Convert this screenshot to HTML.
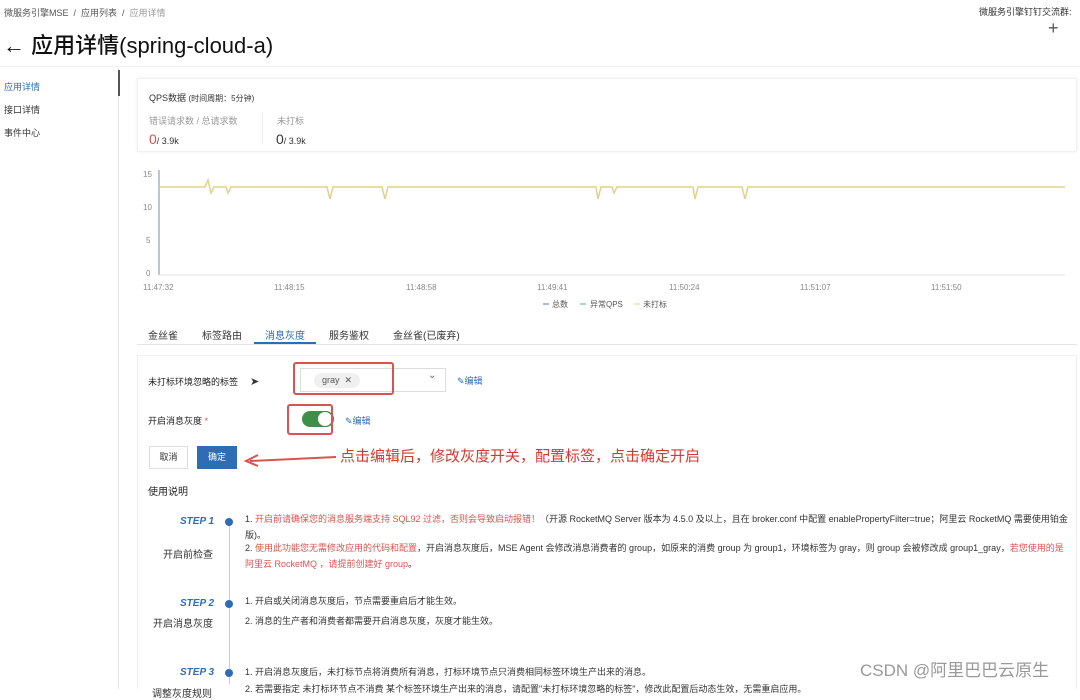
<!DOCTYPE html>
<html><head><meta charset="utf-8"><style>
*{margin:0;padding:0;box-sizing:border-box}
body{width:1080px;height:689px;overflow:hidden;background:#fff;font-family:"Liberation Sans","Noto Sans CJK SC",sans-serif;color:#333;position:relative}
.a{position:absolute;white-space:nowrap}
.s{font-size:9px}
.red{color:#d9534f}
.lk{color:#2e6db4;font-size:9px}
</style></head><body>
<div class="a s" style="left:4px;top:6px;color:#555">微服务引擎MSE &nbsp;/&nbsp; 应用列表 &nbsp;/&nbsp; <span style="color:#999">应用详情</span></div>
<div class="a s" style="left:979px;top:5px;color:#333">微服务引擎钉钉交流群:</div>
<div class="a" style="left:1048px;top:18px;font-size:18px;color:#555">+</div>
<div class="a" style="left:3px;top:28px;font-size:22px;color:#111;font-weight:500">← 应用详情(spring-cloud-a)</div>
<div class="a" style="left:0;top:66px;width:1080px;height:1px;background:#f0f0f0"></div>
<div class="a" style="left:118px;top:68px;width:1px;height:621px;background:#e5e5e5"></div>
<div class="a" style="left:118px;top:70px;width:2px;height:26px;background:#555"></div>
<div class="a s" style="left:4px;top:80px;color:#2e6db4">应用详情</div>
<div class="a s" style="left:4px;top:103px">接口详情</div>
<div class="a s" style="left:4px;top:126px">事件中心</div>

<div class="a" style="left:137px;top:78px;width:940px;height:74px;border:1px solid #f0f0f0;box-shadow:0 0 3px #eee"></div>
<div class="a s" style="left:149px;top:91px">QPS数据 <span style="font-size:8px">(时间周期：5分钟)</span></div>
<div class="a s" style="left:149px;top:114px;color:#999">错误请求数 / 总请求数</div>
<div class="a" style="left:149px;top:131px;font-size:14px"><span class="red">0</span><span style="font-size:9px">/ 3.9k</span></div>
<div class="a" style="left:262px;top:112px;width:1px;height:32px;background:#eee"></div>
<div class="a s" style="left:277px;top:114px;color:#999">未打标</div>
<div class="a" style="left:276px;top:131px;font-size:14px">0<span style="font-size:9px">/ 3.9k</span></div>

<svg class="a" style="left:0;top:0" width="1080" height="320">
<g font-size="8" fill="#888" font-family="Liberation Sans">
<text x="143" y="177">15</text><text x="143" y="210">10</text><text x="146" y="243">5</text><text x="146" y="276">0</text>
<text x="143" y="290">11:47:32</text><text x="274" y="290">11:48:15</text><text x="406" y="290">11:48:58</text><text x="537" y="290">11:49:41</text><text x="669" y="290">11:50:24</text><text x="800" y="290">11:51:07</text><text x="931" y="290">11:51:50</text>
<text x="552" y="307" fill="#555">总数</text><text x="590" y="307" fill="#555">异常QPS</text><text x="643" y="307" fill="#555">未打标</text>
</g>
<line x1="543" y1="304" x2="549" y2="304" stroke="#4b7fb5"/><line x1="580" y1="304" x2="586" y2="304" stroke="#6aa7a0"/><line x1="634" y1="304" x2="640" y2="304" stroke="#e3d08a"/>
<line x1="159" y1="170" x2="159" y2="275" stroke="#6a8faf"/>
<line x1="159" y1="275" x2="1065" y2="275" stroke="#e5e5e5"/>
<polyline fill="none" stroke="#e3d08a" stroke-width="1.5" points="159,187 205,187 208,180 211,193 214,187 226,187 228,193 231,187 327,187 330,199 333,187 382,187 385,199 388,187 596,187 598,199 601,187 612,187 614,193 617,187 693,187 695,199 698,187 742,187 745,199 748,187 1065,187"/>
</svg>

<div class="a" style="left:137px;top:344px;width:940px;height:1px;background:#e5e5e5"></div>
<div class="a" style="left:148px;top:327px;font-size:10px">金丝雀</div>
<div class="a" style="left:202px;top:327px;font-size:10px">标签路由</div>
<div class="a" style="left:265px;top:327px;font-size:10px;color:#2e6db4">消息灰度</div>
<div class="a" style="left:254px;top:342px;width:62px;height:2px;background:#2e6db4"></div>
<div class="a" style="left:329px;top:327px;font-size:10px">服务鉴权</div>
<div class="a" style="left:393px;top:327px;font-size:10px">金丝雀(已废弃)</div>
<div class="a" style="left:137px;top:355px;width:940px;height:334px;border:1px solid #f0f0f0;border-bottom:none"></div>

<div class="a s" style="left:148px;top:375px;color:#222">未打标环境忽略的标签</div>
<div class="a" style="left:250px;top:375px;font-size:11px">➤</div>
<div class="a" style="left:300px;top:368px;width:146px;height:24px;border:1px solid #ddd"></div>
<div class="a s" style="left:314px;top:373px;background:#f0f0f0;border-radius:8px;padding:2px 8px;color:#555">gray &nbsp;✕</div>
<div class="a" style="left:428px;top:370px;font-size:10px;color:#666">⌄</div>
<div class="a" style="left:293px;top:362px;width:101px;height:33px;border:2px solid #d9534f;border-radius:3px"></div>
<div class="a lk" style="left:457px;top:374px">✎编辑</div>

<div class="a s" style="left:148px;top:414px;color:#222">开启消息灰度 <span class="red">*</span></div>
<div class="a" style="left:302px;top:411px;width:32px;height:16px;border-radius:8px;background:#3f8f4a"></div>
<div class="a" style="left:318px;top:412px;width:14px;height:14px;border-radius:7px;background:#fff"></div>
<div class="a" style="left:287px;top:404px;width:46px;height:31px;border:2px solid #d9534f;border-radius:3px"></div>
<div class="a lk" style="left:345px;top:414px">✎编辑</div>

<div class="a s" style="left:149px;top:446px;width:39px;height:23px;border:1px solid #ddd;text-align:center;line-height:21px">取消</div>
<div class="a s" style="left:197px;top:446px;width:40px;height:23px;background:#2e6db4;color:#fff;text-align:center;line-height:23px">确定</div>
<svg class="a" style="left:240px;top:448px" width="100" height="20"><line x1="96" y1="9" x2="10" y2="13" stroke="#d9534f" stroke-width="2"/><path d="M18 7 L6 13 L18 18" fill="none" stroke="#d9534f" stroke-width="2"/></svg>
<div class="a" style="left:340px;top:445px;font-size:15px;color:#d03b2f;background:#fff">点击编辑后，修改灰度开关，配置标签，点击确定开启</div>

<div class="a" style="left:148px;top:483px;font-size:10px;color:#222">使用说明</div>
<div class="a" style="left:229px;top:524px;width:1px;height:160px;background:#ccc"></div>
<div class="a" style="left:180px;top:516px;font-size:10px;font-weight:bold;font-style:italic;color:#2e6db4">STEP 1</div>
<div class="a" style="left:225px;top:518px;width:8px;height:8px;border-radius:4px;background:#2e6db4"></div>
<div class="a" style="left:163px;top:546px;font-size:10px">开启前检查</div>
<div class="a s" style="left:245px;top:511px;font-size:9px;line-height:16px;white-space:normal;width:825px">1. <span class="red">开启前请确保您的消息服务端支持 SQL92 过滤，否则会导致启动报错！</span>（开源 RocketMQ Server 版本为 4.5.0 及以上，且在 broker.conf 中配置 enablePropertyFilter=true；阿里云 RocketMQ 需要使用铂金版)。</div>
<div class="a s" style="left:245px;top:540px;font-size:9px;line-height:16px;white-space:normal;width:825px">2. <span class="red">使用此功能您无需修改应用的代码和配置</span>，开启消息灰度后，MSE Agent 会修改消息消费者的 group，如原来的消费 group 为 group1，环境标签为 gray，则 group 会被修改成 group1_gray，<span class="red">若您使用的是阿里云 RocketMQ ，请提前创建好 group</span>。</div>
<div class="a" style="left:180px;top:598px;font-size:10px;font-weight:bold;font-style:italic;color:#2e6db4">STEP 2</div>
<div class="a" style="left:225px;top:600px;width:8px;height:8px;border-radius:4px;background:#2e6db4"></div>
<div class="a" style="left:153px;top:615px;font-size:10px">开启消息灰度</div>
<div class="a s" style="left:245px;top:594px">1. 开启或关闭消息灰度后，节点需要重启后才能生效。</div>
<div class="a s" style="left:245px;top:614px">2. 消息的生产者和消费者都需要开启消息灰度，灰度才能生效。</div>
<div class="a" style="left:180px;top:667px;font-size:10px;font-weight:bold;font-style:italic;color:#2e6db4">STEP 3</div>
<div class="a" style="left:225px;top:669px;width:8px;height:8px;border-radius:4px;background:#2e6db4"></div>
<div class="a" style="left:152px;top:685px;font-size:10px">调整灰度规则</div>
<div class="a s" style="left:245px;top:665px">1. 开启消息灰度后，未打标节点将消费所有消息，打标环境节点只消费相同标签环境生产出来的消息。</div>
<div class="a s" style="left:245px;top:682px">2. 若需要指定 未打标环节点不消费 某个标签环境生产出来的消息，请配置"未打标环境忽略的标签"，修改此配置后动态生效，无需重启应用。</div>
<div class="a" style="left:860px;top:656px;font-size:17px;color:#999">CSDN @阿里巴巴云原生</div>
</body></html>
